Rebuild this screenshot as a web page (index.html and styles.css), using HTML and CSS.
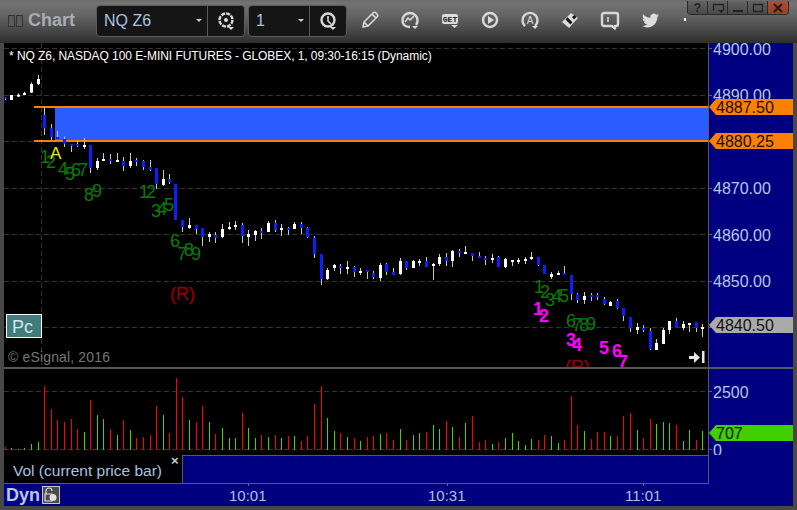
FILE: index.html
```html
<!DOCTYPE html>
<html lang="en">
<head>
<meta charset="utf-8">
<title>Chart</title>
<link rel="stylesheet" href="styles.css">
</head>
<body>
<div class="window">
  <header class="titlebar">
    <div class="brand"><span class="grip"></span><span class="grip"></span><span class="brand-name">Chart</span></div>
    <div class="picker picker-symbol">
      <div class="picker-value">NQ Z6<i class="caret"></i></div>
      <div class="picker-icon">
        <svg class="icon" viewBox="0 0 22 22"><circle class="ln thick dash" cx="11" cy="10" r="6.5"/><circle class="fl" cx="11" cy="10" r="2"/><path class="fl" d="M13 17h6l-3 3z"/></svg>
      </div>
    </div>
    <div class="picker picker-interval">
      <div class="picker-value">1<i class="caret"></i></div>
      <div class="picker-icon">
        <svg class="icon" viewBox="0 0 22 22"><circle class="ln thick" cx="11" cy="10" r="6.5"/><path class="ln" d="M11 6v5l3 3"/><path class="fl" d="M13 17h6l-3 3z"/></svg>
      </div>
    </div>
    <div class="tools">
      <svg class="icon" viewBox="0 0 22 22"><path class="ln" d="M4 18l1-5L14 4c1-1 2-1 3 0l1 1c1 1 1 2 0 3l-9 9zM5 13l4 4M13 5l4 4"/></svg>
      <svg class="icon" viewBox="0 0 22 22"><path class="ln thick" d="M17 16a7.500 7.500 0 1 0-12 0c1.500 1.500 3.500 2 6 2"/><path class="ln" d="M6 13l3-4 2 2 4-4"/><path class="fl" d="M13 17h6l-3 3z"/></svg>
      <svg class="icon" viewBox="0 0 22 22"><rect class="fl" x="3" y="5" width="16" height="10" rx="2"/><text class="get-text" x="11" y="13">GET</text><path class="fl" d="M12 16h7l-3.500 3z"/></svg>
      <svg class="icon" viewBox="0 0 22 22"><circle class="ln thick" cx="11" cy="11" r="7"/><path class="fl" d="M9 7l6 4-6 4z"/></svg>
      <svg class="icon" viewBox="0 0 22 22"><path class="ln thick" d="M6 17a7.500 7.500 0 1 1 10 0"/><text class="a-text" x="11" y="15">A</text><path class="fl" d="M13 17h6l-3 3z"/></svg>
      <svg class="icon" viewBox="0 0 22 22"><path class="fl" d="M3 13l9-9 7 5-9 10z"/><path class="dk" d="M6.500 10.500l5 5 2-2.300-5-5zM13 8l2.500-2 2 2-2.500 2.500z"/></svg>
      <svg class="icon" viewBox="0 0 22 22"><path class="ln thick" d="M5 4h12c1 0 2 1 2 2v9c0 1-1 2-2 2h-1v2.500L13 17H5c-1 0-2-1-2-2V6c0-1 1-2 2-2z"/><path class="ln" d="M9 8v5"/></svg>
      <svg class="icon bird" viewBox="0 0 24 24"><path class="fl" d="M23.953 4.57a10 10 0 01-2.825.775 4.958 4.958 0 002.163-2.723c-.951.555-2.005.959-3.127 1.184a4.92 4.92 0 00-8.384 4.482C7.69 8.095 4.067 6.13 1.64 3.162a4.822 4.822 0 00-.666 2.475c0 1.71.87 3.213 2.188 4.096a4.904 4.904 0 01-2.228-.616v.06a4.923 4.923 0 003.946 4.827 4.996 4.996 0 01-2.212.085 4.936 4.936 0 004.604 3.417 9.867 9.867 0 01-6.102 2.105c-.39 0-.779-.023-1.17-.067a13.995 13.995 0 007.557 2.209c9.053 0 13.998-7.496 13.998-13.985 0-.21 0-.42-.015-.63A9.935 9.935 0 0024 4.59z"/></svg>
    </div>
    <i class="dot"></i>
    <div class="winbtns">
      <span class="winbtn">?</span>
      <span class="winbtn"><svg viewBox="0 0 16 12"><path class="wg" d="M3.500 8.500v-6h10v6"/><path class="wf" d="M8 8h6l-3 3z"/></svg></span>
      <span class="winbtn"><svg viewBox="0 0 16 12"><path class="wf" d="M3 8h10v2H3z"/></svg></span>
      <span class="winbtn"><svg viewBox="0 0 16 12"><path class="wg" d="M3.500 2.500h9v7h-9z"/></svg></span>
      <span class="winbtn close"><svg viewBox="0 0 16 12"><path class="wx" d="M4 2l8 8M12 2l-8 8"/></svg></span>
    </div>
  </header>

  <div class="workspace">
    <section class="row price-row">
      <svg class="plot" viewBox="4 43 704 324" width="704" height="324">
        <g class="grid">
          <path d="M4 48.500H708M4 95.500H708M4 141.500H708M4 188.500H708M4 234.500H708M4 281.500H708M4 327.500H708"/>
          <path d="M41.500 43V365"/>
        </g>
        <rect class="zone" x="55" y="108" width="653" height="32"/>
        <rect class="zone-line" x="34" y="106" width="674" height="2"/>
        <rect class="zone-line" x="34" y="140" width="674" height="2"/>
        <g id="candles"></g>
        <text class="info" x="9" y="60">* NQ Z6, NASDAQ 100 E-MINI FUTURES - GLOBEX, 1, 09:30-16:15 (Dynamic)</text>
        <g class="cnt">
          <text x="40" y="163">1</text><text x="46" y="168">2</text><text x="58" y="175">4</text><text x="65" y="180">5</text><text x="71" y="176">6</text><text x="78" y="176">7</text>
          <text x="84" y="201">8</text><text x="92" y="197">9</text><text x="139" y="198">1</text><text x="146" y="198">2</text>
          <text x="151" y="217">3</text><text x="157" y="215">4</text><text x="164" y="211">5</text>
          <text x="170" y="247">6</text><text x="177" y="260">7</text><text x="184" y="256">8</text><text x="191" y="260">9</text>
          <text x="534" y="293">1</text><text x="540" y="298">2</text><text x="545" y="306">3</text><text x="552" y="302">4</text><text x="559" y="302">5</text>
          <text x="566" y="327">6</text><text x="572" y="331">7</text><text x="579" y="331">8</text><text x="586" y="330">9</text>
        </g>
        <text class="mark-a" x="50" y="159">A</text>
        <g class="mag">
          <text x="533" y="315">1</text><text x="539" y="322">2</text><text x="566" y="346">3</text><text x="572" y="351">4</text>
          <text x="599" y="354">5</text><text x="612" y="357">6</text><text x="618" y="368">7</text>
        </g>
        <text class="rev" x="170" y="300">(R)</text>
        <text class="rev" x="565" y="373">(R)</text>
        <rect class="pc-box" x="6.500" y="314.500" width="35" height="23"/>
        <text class="pc-text" x="12" y="333">Pc</text>
        <text class="copy" x="8" y="362">© eSignal, 2016</text>
        <path class="end-ico" d="M689 356h5v-4l6 5.500-6 5.500v-4h-5zM702 351h2.500v12H702z"/>
      </svg>
      <svg class="axis" viewBox="708 43 85 324" width="85" height="324">
        <path class="axis-edge" d="M708.500 43V367"/>
        <path class="tick" d="M708 48.500h4M708 95.500h4M708 141.500h4M708 188.500h4M708 234.500h4M708 281.500h4M708 327.500h4"/>
        <g class="ax">
          <text x="713" y="55">4900.00</text><text x="713" y="101">4890.00</text><text x="713" y="194">4870.00</text>
          <text x="713" y="241">4860.00</text><text x="713" y="287">4850.00</text>
        </g>
        <path class="tag-o" d="M709 107l7-8h77v16h-77zM709 141l7-8h77v16h-77z"/>
        <path class="tag-g" d="M709 325l7-8h77v16h-77z"/>
        <g class="ax tag-t"><text x="716" y="113">4887.50</text><text x="716" y="147">4880.25</text><text x="716" y="331">4840.50</text></g>
      </svg>
    </section>

    <div class="hsep"></div>

    <section class="row vol-row">
      <svg class="plot" viewBox="4 369 704 86" width="704" height="86">
        <g class="grid"><path d="M4 391.500H708M4 449.500H708"/></g>
        <g id="volume"></g>
      </svg>
      <svg class="axis" viewBox="708 369 85 86" width="85" height="86">
        <path class="axis-edge" d="M708.500 369V455"/>
        <path class="tick" d="M708 391.500h4M708 449.500h4"/>
        <g class="ax"><text x="713" y="398">2500</text><text x="713" y="456">0</text></g>
        <path class="tag-v" d="M709 433l7-8h77v16h-77z"/>
        <g class="ax tag-t"><text x="716" y="439">707</text></g>
      </svg>
    </section>

    <section class="row legend-row">
      <div class="legend">
        <span class="legend-name">Vol (current price bar)</span>
        <span class="legend-x">×</span>
      </div>
      <div class="legend-fill"></div>
      <div class="legend-axis"></div>
    </section>

    <section class="row time-row">
      <div class="dyn">Dyn</div>
      <svg class="lock" viewBox="0 0 18 18"><rect class="lock-bg" x=".5" y=".5" width="17" height="17"/><path class="lock-ln" d="M4 8V5a3 3 0 0 1 6 0M3 8h7v7H3z"/><circle class="lock-c" cx="11" cy="11.500" r="3.500"/></svg>
      <div class="times"><span class="time t1">10:01</span><span class="time t2">10:31</span><span class="time t3">11:01</span></div>
    </section>
  </div>
</div>
<script src="chart.js"></script>
</body>
</html>
```
FILE: styles.css
```css
* { box-sizing: border-box; }
html, body { margin: 0; padding: 0; background: #3c3c3c; }
body { width: 797px; height: 510px; overflow: hidden; font-family: "Liberation Sans", Arial, sans-serif; }
.window { width: 797px; height: 510px; display: flex; flex-direction: column; background: #484848; }

.titlebar { height: 43px; flex: none; display: flex; background: linear-gradient(#6a6a6a 0, #737373 6%, #656565 35%, #484848 70%, #2e2e2e 100%); position: relative; }
.brand { width: 96px; display: flex; align-items: center; padding: 0 0 2px 8px; }
.grip { width: 7px; height: 12px; margin-right: 1px; border: 1px solid #333; background: #5c5c5c; }
.brand-name { margin-left: 4px; font-size: 18px; font-weight: bold; color: #a8acb4; }
.picker { margin-top: 5px; height: 32px; display: flex; background: #151515; border: 1px solid #5a5a5a; border-radius: 4px; }
.picker-symbol { width: 149px; }
.picker-interval { width: 99px; margin-left: 3px; }
.picker-value { flex: 1; position: relative; padding-left: 7px; line-height: 29px; font-size: 16px; color: #a9c3e0; }
.caret { position: absolute; right: 5px; top: 13px; border: 3px solid transparent; border-top: 3px solid #ccc; border-bottom: 0; }
.picker-icon { width: 37px; border-left: 1px solid #5a5a5a; display: flex; align-items: center; justify-content: center; }
.icon { width: 22px; height: 22px; display: block; }
.tools { margin-left: 3px; width: 320px; display: grid; grid-template-columns: repeat(8, 40px); justify-items: center; align-items: center; padding-bottom: 3px; }
.bird { width: 17px; height: 17px; }
.ln { fill: none; stroke: #d8d8d8; stroke-width: 1.6; stroke-linejoin: round; }
.thick { stroke-width: 2.4; }
.dash { stroke-dasharray: 4 1; }
.fl { fill: #dcdcdc; }
.dk { fill: #151515; }
.get-text { font: bold 8px "Liberation Mono", monospace; text-anchor: middle; fill: #222; }
.a-text { font: 10px "Liberation Sans", sans-serif; text-anchor: middle; fill: #ddd; }
.dot { width: 2px; height: 3px; background: #fff; margin: 18px 0 0 14px; }
.winbtns { margin: 1px 0 0 1px; height: 14px; display: flex; border: 1px solid #2a2a2a; border-top: 0; border-radius: 0 0 4px 4px; overflow: hidden; }
.winbtn { width: 20px; display: flex; align-items: center; justify-content: center; background: linear-gradient(#626262, #4a4a4a); border-right: 1px solid #2a2a2a; font-size: 12px; font-weight: bold; color: #222; }
.winbtn svg { width: 16px; height: 12px; }
.winbtn.close { background: linear-gradient(#b04c34, #96402a); border-right: 0; }
.wg { fill: none; stroke: #222; stroke-width: 1.300; }
.wf { fill: #222; }
.wx { fill: none; stroke: #2a1a14; stroke-width: 2.200; }

.workspace { flex: none; margin: 0 4px 4px; width: 789px; height: 463px; display: flex; flex-direction: column; background: #000080; }
.row { display: flex; flex: none; }
.plot { display: block; background: #000; flex: none; overflow: hidden; }
.axis { display: block; background: #000080; flex: none; overflow: hidden; }
.price-row { height: 324px; }
.hsep { height: 2px; flex: none; background: #565656; }
.vol-row { height: 86px; }

.grid path { fill: none; stroke: #333; stroke-width: 1; stroke-dasharray: 5 3; }
.zone { fill: #2a5cff; }
.zone-line { fill: #ff8000; }
.info { font-size: 12px; letter-spacing: -0.06px; fill: #fff; }
.cnt text { font-size: 18px; fill: #0a7a0a; }
.mag text { font-size: 18px; fill: #ff00ff; font-weight: bold; }
.mark-a { font-size: 17px; fill: #e6e63c; }
.rev { font-size: 18px; fill: #8b0000; stroke: #8b0000; stroke-width: .4; }
.pc-box { fill: #3f7c7c; stroke: #fff; stroke-width: 1; }
.pc-text { font-size: 18px; fill: #d4e4ec; }
.copy { font-size: 14px; letter-spacing: .15px; fill: #777; }
.end-ico { fill: #e6e6e6; }
.axis-edge { stroke: #5a5a5a; fill: none; }
.tick { stroke: #5a5a5a; fill: none; }
.ax text { font-size: 16px; fill: #b4c8e6; }
.tag-o { fill: #ff8000; }
.tag-g { fill: #aaaaaa; }
.tag-v { fill: #40d000; }
.tag-t text { fill: #111; }

.legend-row { height: 29px; }
.legend { width: 178px; background: #000; position: relative; padding: 7px 0 0 9px; height: 28px; box-shadow: 0 1px 0 #5a5a5a; }
.legend-name { font-size: 15.5px; color: #a9c3e0; line-height: 18px; display: block; }
.legend-x { position: absolute; left: 167px; top: -2px; font-size: 13px; font-weight: bold; color: #ccc; }
.legend-fill { width: 526px; height: 29px; background: #000080; border-top: 1px solid #5a5a5a; border-left: 1px solid #5a5a5a; border-bottom: 1px solid #5a5a5a; }
.legend-axis { width: 85px; background: #000080; border-left: 1px solid #5a5a5a; height: 29px; }

.time-row { height: 22px; align-items: center; position: relative; }
.dyn { width: 38px; padding-left: 2px; font-size: 18px; font-weight: bold; color: #b8c8e8; }
.lock { width: 18px; height: 18px; display: block; flex: none; }
.lock-bg { fill: #4a4a4a; stroke: #c8c8c8; }
.lock-ln { fill: none; stroke: #e0e0e0; stroke-width: 1.200; }
.lock-c { fill: #e0e0e0; }
.times { position: relative; width: 648px; height: 22px; }
.time { position: absolute; top: 3px; font-size: 15px; color: #a9c3e0; }
.time::before { content: ""; position: absolute; left: 50%; top: -3px; width: 1px; height: 2px; background: #6a6a8a; }
.t1 { left: 229px; margin-left: -60px; }
.t2 { left: 428px; margin-left: -60px; }
.t3 { left: 625px; margin-left: -60px; }
```
FILE: chart.js
```js
var NS = "http://www.w3.org/2000/svg";
function rect(parent, x, y, w, h, fill) {
  var r = document.createElementNS(NS, "rect");
  r.setAttribute("x", x); r.setAttribute("y", y);
  r.setAttribute("width", w); r.setAttribute("height", Math.max(h, 1));
  r.setAttribute("fill", fill);
  parent.appendChild(r);
}
var BLUE = "#0a1eff", WHITE = "#ffffff", WICK = "#c8c8c8";
// x, wickTop, wickBottom, bodyTop, bodyBottom, colour (w/b), sampled at 3x from an origin
function candles(ox, oy, rows) {
  var g = document.getElementById("candles");
  rows.forEach(function (c) {
    var x = ox + Math.floor(c[0] / 3);
    var wt = oy + c[1] / 3, wb = oy + c[2] / 3, bt = oy + c[3] / 3, bb = oy + c[4] / 3;
    rect(g, x, wt, 1, wb - wt, WICK);
    rect(g, x - 1, bt, 3, bb - bt, c[5] ? BLUE : WHITE);
  });
}
candles(0, 70, [
  [15,82,90,82,87,1],[34,75,90,75,90,0],[55,70,80,74,80,0],[73,65,75,69,75,0],[94,37,68,42,68,0],[115,15,45,27,42,0],
  [133,112,195,135,175,1],[154,162,210,175,201,1],[172,183,207,201,207,1],[193,200,231,207,221,1],[214,222,246,222,228,1],
  [232,213,231,222,228,1],[253,204,237,225,231,0],[271,225,309,225,294,1],[292,264,300,273,294,0],[310,249,273,267,273,0],
  [331,252,282,267,273,1],[352,249,276,270,276,0],[370,261,303,273,288,1],[391,249,294,273,288,0],[409,264,288,270,276,1],
  [430,270,300,273,291,1],[451,270,303,291,300,1],[469,294,357,294,342,1],[490,300,348,327,345,0],[508,312,342,327,336,1]
]);
candles(170, 170, [
  [16,42,149,42,149,1],[37,150,186,150,171,1],[58,144,177,165,174,0],[79,165,192,165,177,1],[97,174,228,174,201,1],
  [118,186,216,192,201,0],[136,186,219,195,204,1],[157,162,204,177,201,0],[178,156,180,171,177,0],[196,153,180,165,171,0],
  [217,159,219,165,198,1],[235,180,228,192,201,0],[256,180,213,183,195,0],[274,174,207,183,189,1],[295,153,186,159,186,0],
  [316,150,186,159,180,1],[334,162,198,174,180,0],[355,171,195,174,180,1],[373,156,177,162,177,0],[394,156,192,162,174,1],
  [412,171,204,174,201,1],[433,198,264,204,252,1],[454,252,345,252,327,1],[472,294,330,300,327,0],[493,282,303,285,294,0],
  [511,282,312,288,294,1],[532,273,312,291,297,0],[553,288,321,291,306,1],[571,294,315,303,309,0],[592,300,327,300,306,1],
  [610,303,327,309,321,1],[631,279,333,285,324,0],[649,279,315,282,306,1],[670,294,315,306,315,1],[691,264,315,273,312,0],
  [709,273,300,273,294,1],[730,270,294,273,294,0],[748,267,288,273,279,0],[769,261,291,273,291,1],[790,279,330,282,288,0],
  [808,252,288,261,282,0],[829,249,288,261,273,1],[847,240,291,243,273,0],[868,237,261,243,249,1],[886,228,252,246,252,0],
  [907,249,273,249,258,1],[928,246,264,258,264,1],[946,258,285,264,270,1],[967,252,279,264,270,0],[985,258,291,261,291,1]
]);
candles(500, 250, [
  [16,24,54,27,51,0],[37,30,48,30,36,0],[55,24,42,30,36,0],[76,21,42,27,33,0],[94,6,30,21,27,0],[115,21,48,21,45,1],
  [133,45,72,45,72,1],[154,66,87,72,81,0],[175,63,75,69,75,0],[193,48,75,69,75,1],[214,75,150,75,132,1],[232,129,159,132,150,1],
  [253,126,162,138,150,0],[274,129,153,135,141,1],[292,129,150,135,141,1],[313,141,165,147,162,1],[331,153,168,156,168,0],
  [352,147,177,153,174,1],[370,174,213,174,198,1],[391,201,246,201,234,1],[412,219,252,231,240,0],[430,225,246,234,240,1],
  [451,234,300,243,297,1],[469,267,300,279,300,0],[490,234,282,240,282,0],[508,213,252,213,240,0],[529,204,234,213,234,1],
  [550,213,240,222,234,0],[568,219,246,219,225,0],[589,216,246,216,234,1],[607,222,261,231,237,0]
]);
// x, top, colour (r/g) sampled at 3x; baseline passed in
function volume(ox, oy, base, rows) {
  var g = document.getElementById("volume");
  rows.forEach(function (v) {
    var x = ox + Math.floor(v[0] / 3), t = oy + v[1] / 3, b = oy + base / 3;
    rect(g, x, t, 1, b - t, v[2] ? "#ff0000" : "#44d400");
  });
}
volume(0, 300, 450, [
  [15,441,1],[34,444,0],[55,447,0],[73,444,0],[94,432,0],[115,426,0],[133,258,1],[154,327,1],[172,360,1],[193,366,1],[214,357,1],
  [232,387,1],[253,396,0],[271,300,1],[292,345,0],[310,357,0],[331,387,1],[352,405,0],[370,360,1],[391,390,0],[409,414,1],[430,411,1],
  [451,405,1],[469,318,1],[490,345,0],[508,399,1],[529,234,1],[547,291,1],[568,360,0],[589,366,1],[607,318,1],[628,366,0],[646,402,1],
  [667,384,0],[688,414,0],[706,414,0],[727,339,1],[745,384,0]
]);
volume(250, 370, 240, [
  [16,204,0],[34,195,1],[55,201,0],[76,195,1],[94,204,0],[115,198,1],[133,198,0],[154,213,1],[172,198,1],[193,102,1],[214,48,1],
  [232,144,0],[253,183,0],[271,189,1],[292,201,0],[313,204,1],[331,213,0],[352,201,1],[370,198,1],[391,192,0],[409,189,1],[430,210,1],
  [451,177,0],[469,210,1],[490,195,0],[508,189,0],[529,186,1],[550,165,0],[568,177,0],[589,153,1],[607,171,0],[628,201,1],[646,159,0],
  [667,138,1],[688,216,1],[706,210,1],[727,222,0],[745,216,1]
]);
volume(500, 370, 240, [
  [16,204,0],[37,189,0],[55,213,0],[76,225,0],[94,207,0],[115,210,1],[133,195,1],[154,198,0],[175,219,0],[193,210,1],[214,78,1],
  [232,165,1],[253,183,0],[274,207,1],[292,186,1],[313,186,1],[331,198,0],[352,198,1],[370,138,1],[391,129,1],[412,180,0],[430,204,1],
  [451,147,1],[469,162,0],[490,156,0],[508,159,0],[529,165,1],[550,213,0],[568,180,0],[589,210,1],[607,183,0]
]);
```
